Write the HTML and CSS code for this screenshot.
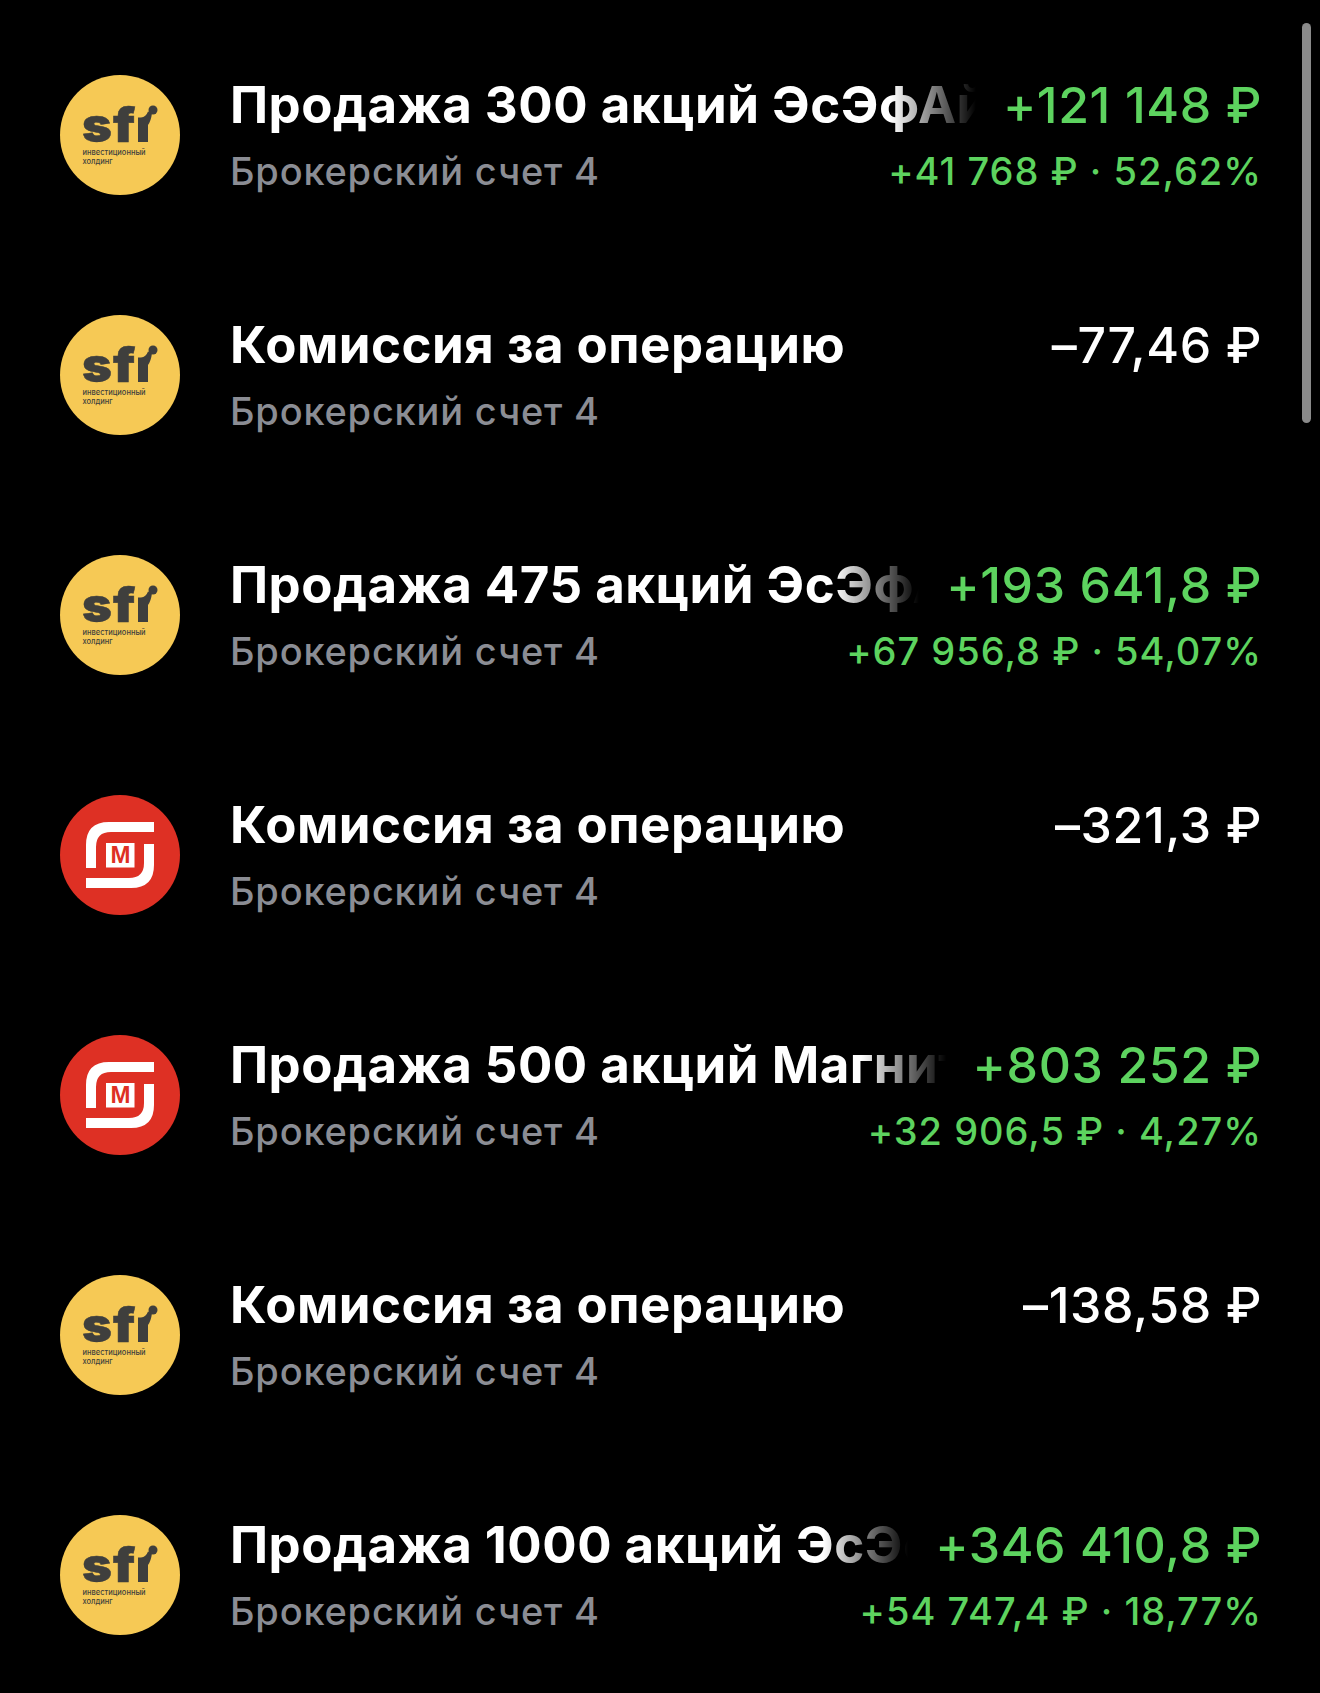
FILE: index.html
```html
<!DOCTYPE html>
<html lang="ru">
<head>
<meta charset="utf-8">
<title>Операции</title>
<link rel="stylesheet" href="styles.css">
</head>
<body>
<svg class="defs" width="0" height="0" aria-hidden="true">
  <symbol id="sfi" viewBox="0 0 120 120">
    <circle cx="60" cy="60" r="60" fill="#f6c955"/>
    <text class="sfi-mark" transform="translate(22 67) scale(1.08 1)">s</text>
    <text class="sfi-mark" transform="translate(53 67) scale(1.12 1)">f</text>
    <path d="M78 67V42.500H81Q86 42 88 36.500L92 38Q91 46 88 50V67Z" fill="#3f3f3d"/>
    <circle cx="93" cy="35" r="4.500" fill="#3f3f3d"/>
    <text class="sfi-small" x="22.500" y="80">инвестиционный</text>
    <text class="sfi-small" x="22.500" y="89">холдинг</text>
  </symbol>
  <symbol id="magnit" viewBox="0 0 120 120">
    <circle cx="60" cy="60" r="60" fill="#de3024"/>
    <path d="M94 27H49Q26 27 26 50V73H36V52Q36 37 51 37H94Z" fill="#fff"/>
    <path d="M26 93H71Q94 93 94 70V49H84V68Q84 83 69 83H26Z" fill="#fff"/>
    <rect x="46" y="48" width="28.500" height="24.500" fill="#fff"/>
    <text class="magnit-m" x="60.500" y="68">М</text>
  </symbol>
</svg>
<main class="list">
  <article class="row">
    <svg class="logo"><use href="#sfi"/></svg>
    <div class="body">
      <div class="line"><div class="title fade">Продажа 300 акций ЭсЭфАй</div><div class="amount plus">+121 148 ₽</div></div>
      <div class="line"><div class="sub">Брокерский счет 4</div><div class="delta">+41 768 ₽ · 52,62%</div></div>
    </div>
  </article>
  <article class="row">
    <svg class="logo"><use href="#sfi"/></svg>
    <div class="body">
      <div class="line"><div class="title">Комиссия за операцию</div><div class="amount">–77,46 ₽</div></div>
      <div class="line"><div class="sub">Брокерский счет 4</div></div>
    </div>
  </article>
  <article class="row">
    <svg class="logo"><use href="#sfi"/></svg>
    <div class="body">
      <div class="line"><div class="title fade">Продажа 475 акций ЭсЭфАй</div><div class="amount plus">+193 641,8 ₽</div></div>
      <div class="line"><div class="sub">Брокерский счет 4</div><div class="delta">+67 956,8 ₽ · 54,07%</div></div>
    </div>
  </article>
  <article class="row">
    <svg class="logo"><use href="#magnit"/></svg>
    <div class="body">
      <div class="line"><div class="title">Комиссия за операцию</div><div class="amount">–321,3 ₽</div></div>
      <div class="line"><div class="sub">Брокерский счет 4</div></div>
    </div>
  </article>
  <article class="row">
    <svg class="logo"><use href="#magnit"/></svg>
    <div class="body">
      <div class="line"><div class="title fade">Продажа 500 акций Магнит</div><div class="amount plus">+803 252 ₽</div></div>
      <div class="line"><div class="sub">Брокерский счет 4</div><div class="delta">+32 906,5 ₽ · 4,27%</div></div>
    </div>
  </article>
  <article class="row">
    <svg class="logo"><use href="#sfi"/></svg>
    <div class="body">
      <div class="line"><div class="title">Комиссия за операцию</div><div class="amount">–138,58 ₽</div></div>
      <div class="line"><div class="sub">Брокерский счет 4</div></div>
    </div>
  </article>
  <article class="row">
    <svg class="logo"><use href="#sfi"/></svg>
    <div class="body">
      <div class="line"><div class="title fade">Продажа 1000 акций ЭсЭфАй</div><div class="amount plus">+346 410,8 ₽</div></div>
      <div class="line"><div class="sub">Брокерский счет 4</div><div class="delta">+54 747,4 ₽ · 18,77%</div></div>
    </div>
  </article>
</main>
<div class="scrollbar"></div>
</body>
</html>
```

FILE: styles.css
```css
* { box-sizing: border-box; }
html, body { margin: 0; height: 100%; background: #000; }
body { font-family: Inter, "Noto Sans", sans-serif; overflow: hidden; position: relative; }
.defs { position: absolute; }
.list { display: flex; flex-direction: column; gap: 120px; padding: 75px 58px 0 60px; }
.row { display: flex; height: 120px; gap: 50px; }
.logo { width: 120px; height: 120px; flex: none; }
.body { flex: 1; min-width: 0; display: flex; flex-direction: column; gap: 14px; padding-top: 1px; }
.line { display: flex; justify-content: space-between; align-items: baseline; gap: 27px; }
.title { flex: 1; min-width: 0; white-space: nowrap; overflow: hidden; color: #fff; font-size: 51px; font-weight: 700; line-height: 58px; letter-spacing: 0.5px; }
.fade { -webkit-mask-image: linear-gradient(to left, transparent 0, #000 85px); mask-image: linear-gradient(to left, transparent 0, #000 85px); }
.amount { flex: none; white-space: nowrap; color: #fff; font-size: 50px; font-weight: 500; line-height: 58px; letter-spacing: 0.6px; }
.plus { color: #5dd35f; }
.sub { color: #8b8d94; font-size: 38px; font-weight: 500; line-height: 46px; white-space: nowrap; letter-spacing: 0.8px; }
.delta { color: #5dd35f; font-size: 38px; font-weight: 500; line-height: 46px; white-space: nowrap; letter-spacing: 1px; }
.scrollbar { position: absolute; top: 23px; right: 9px; width: 9px; height: 400px; border-radius: 5px; background: #8a8a8a; }
.sfi-mark { font-family: Inter, sans-serif; font-size: 47px; font-weight: 900; fill: #3f3f3d; stroke: #3f3f3d; stroke-width: 0.5px; }
.sfi-small { font-family: Inter, sans-serif; font-size: 7.500px; font-weight: 500; fill: #3f3f3d; }
.magnit-m { font-family: "Liberation Sans", sans-serif; font-size: 24px; font-weight: 700; fill: #de3024; text-anchor: middle; }
```
